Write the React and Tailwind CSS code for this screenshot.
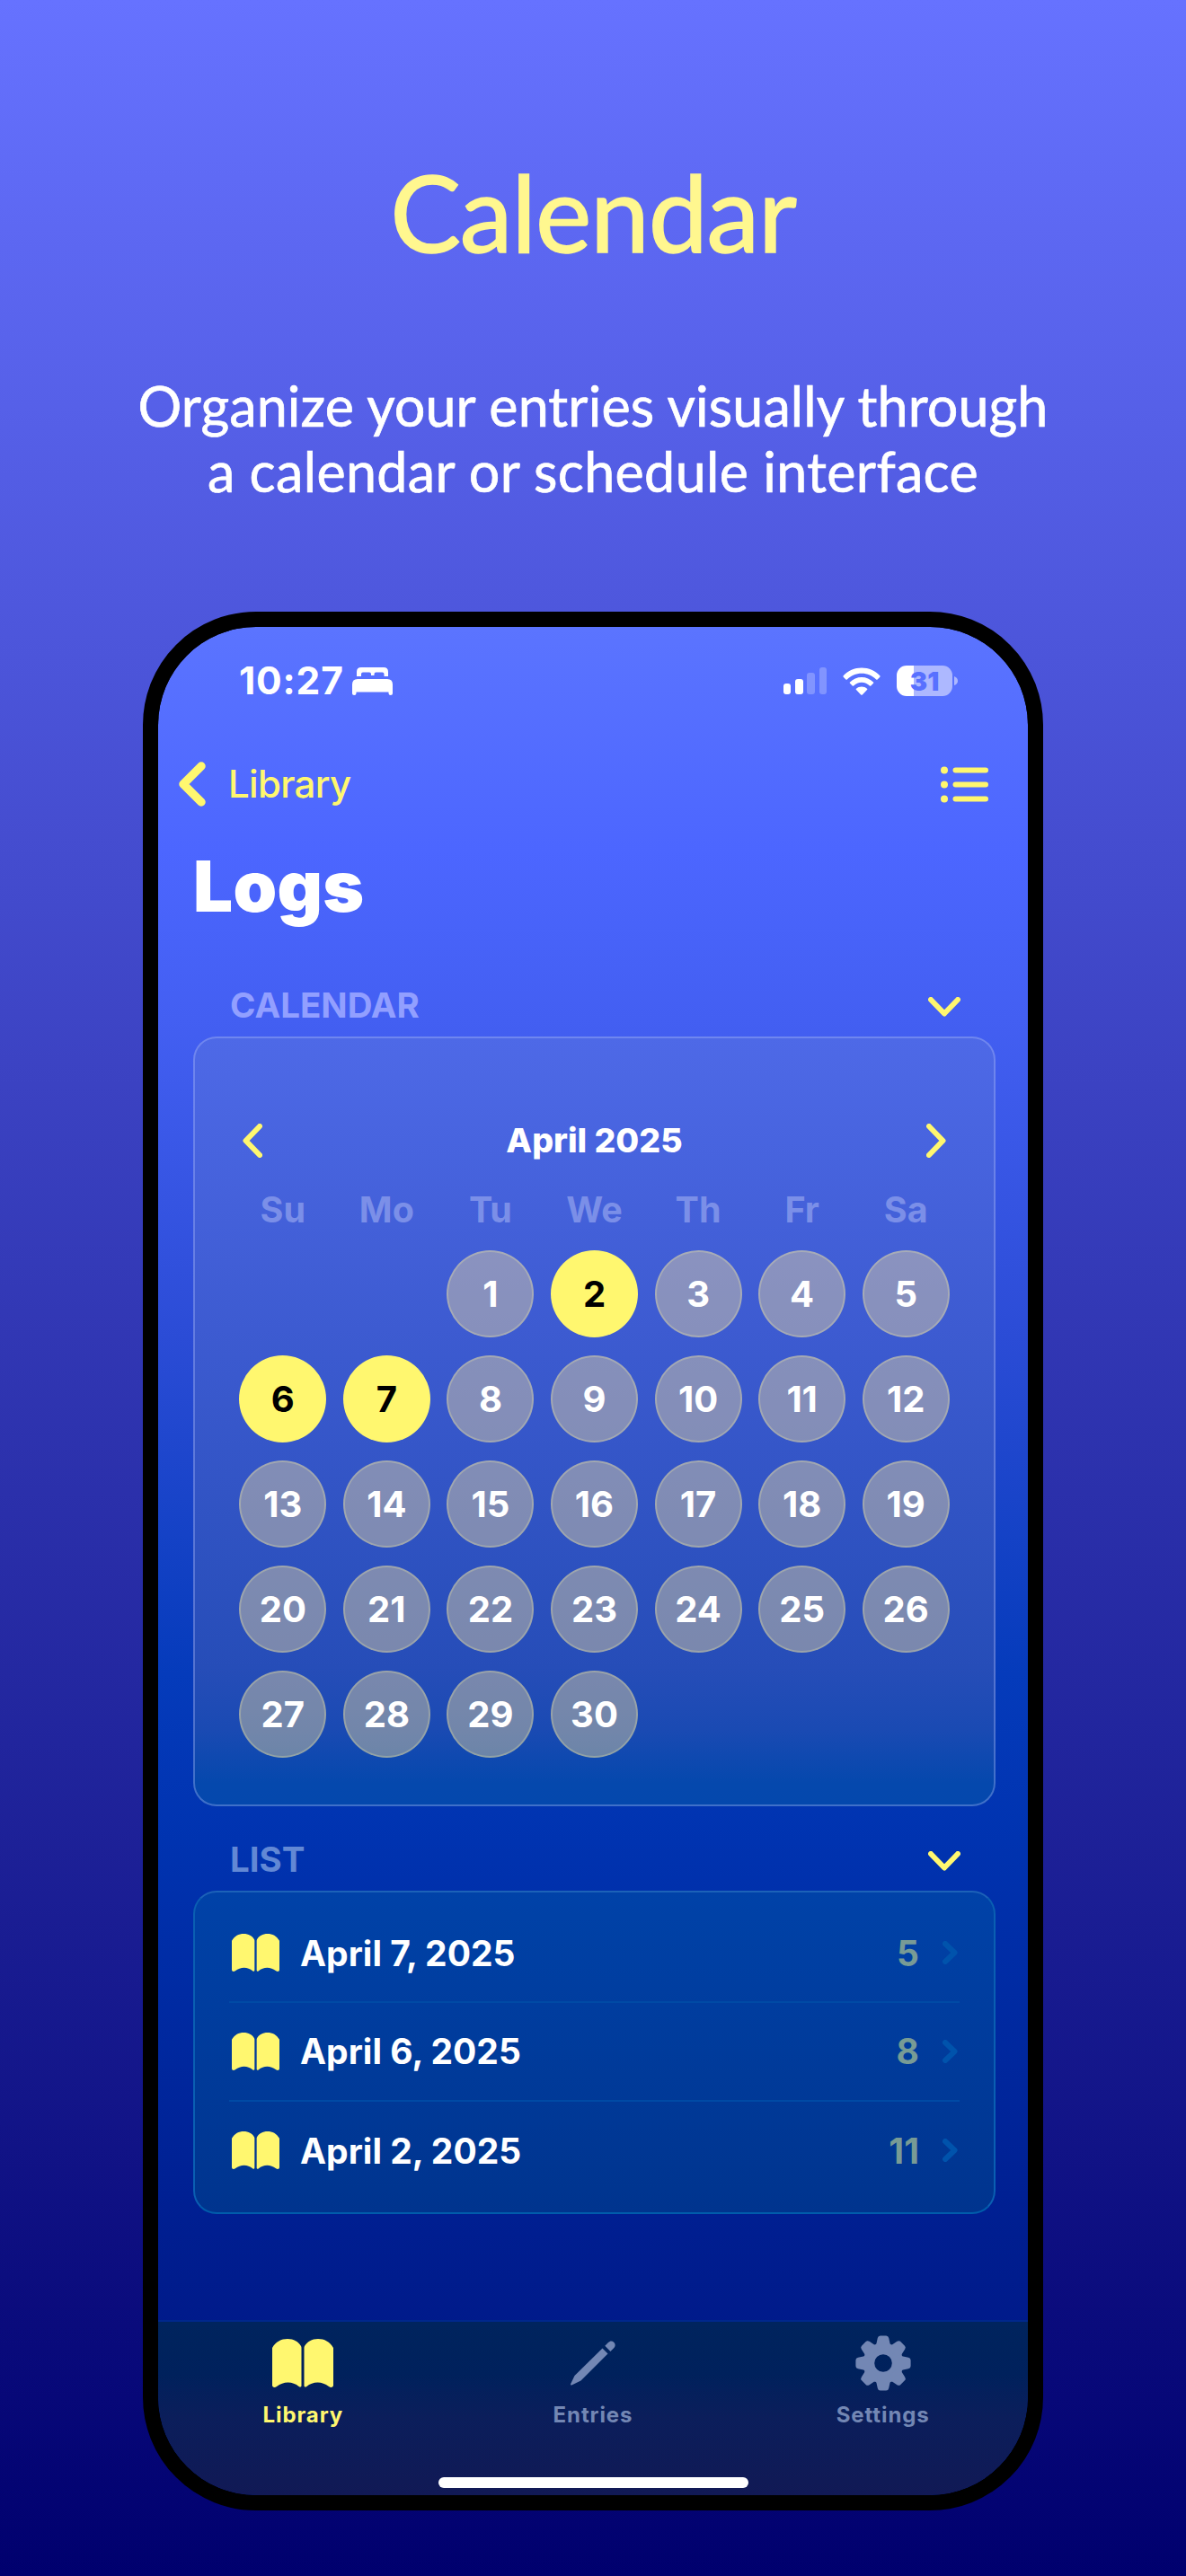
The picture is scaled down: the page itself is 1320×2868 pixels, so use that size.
import React from "react";

const DAYS = ["Su", "Mo", "Tu", "We", "Th", "Fr", "Sa"];
const MARKED = [2, 6, 7];
const CELLS = [null, null, ...Array.from({ length: 30 }, (_, i) => i + 1)];
const ENTRIES = [
  { date: "April 7, 2025", count: 5 },
  { date: "April 6, 2025", count: 8 },
  { date: "April 2, 2025", count: 11 },
];

function Chevron({ d, box, width, className }) {
  return (
    <svg viewBox={box} className={className} fill="none" stroke="currentColor" strokeWidth={width} strokeLinecap="round" strokeLinejoin="round">
      <path d={d} />
    </svg>
  );
}

function Book({ className }) {
  return (
    <svg viewBox="0 0 68 54" preserveAspectRatio="none" className={className} fill="currentColor">
      <path d="M0 10C4 3 10 0 17 0s12 3 15 8q.5 1 .5 2v42c0 1.500-1.500 2-2.500 1.200C26 50 22 48.500 17.500 48.500S9 50 5 53c-2.500 1.800-5 .8-5-1.500z" />
      <path d="M68 10C64 3 58 0 51 0S39 3 36 8q-.5 1-.5 2v42c0 1.500 1.500 2 2.500 1.200 4-3.200 8-4.700 12.500-4.700S59 50 63 53c2.500 1.800 5 .8 5-1.500z" />
    </svg>
  );
}

function Bed() {
  return (
    <svg viewBox="0 0 45 31" className="h-[31px] w-[45px]" fill="currentColor">
      <path d="M5 10V5q0-5 5-5h25q5 0 5 5v5h-4.500V7.500q0-2-2-2h-7q-2 0-2 2V9h-3.500V7.500q0-2-2-2h-7q-2 0-2 2V10z" />
      <path d="M0 19q0-6 6-6h33q6 0 6 6v10q0 2-2.200 2t-2.300-2v-1.500H4.500V29q0 2-2.300 2T0 29z" />
    </svg>
  );
}

function Wifi() {
  return (
    <svg viewBox="0 0 42 31" className="h-[31px] w-[42px]" fill="currentColor">
      <path d="M.7 9.300C6 3.800 13 .5 21 .5s15 3.300 20.300 8.800q.7.700 0 1.400l-2.700 2.700q-.7.700-1.400 0C33 9.200 27.300 6.700 21 6.700S9 9.200 4.800 13.400q-.7.700-1.400 0L.7 10.700q-.7-.7 0-1.400z" />
      <path d="M8 16.400c3.400-3.500 8-5.500 13-5.500s9.600 2 13 5.500q.7.700 0 1.400l-2.700 2.700q-.7.700-1.400 0C27.500 18.300 24.500 16.800 21 16.800s-6.500 1.500-8.900 3.700q-.7.700-1.400 0L8 17.800q-.7-.7 0-1.400z" />
      <path d="M15 23.700c1.600-1.500 3.700-2.300 6-2.300s4.400.8 6 2.300q.7.700 0 1.400l-5.200 5.300q-.8.800-1.600 0L15 25.100q-.7-.7 0-1.400z" />
    </svg>
  );
}

function Pencil() {
  return (
    <svg viewBox="0 0 50 50" className="h-[50px] w-[50px]" fill="currentColor">
      <path d="M35.500 8.500l6 6-30 30L1.300 49.400c-.9.400-1.600-.3-1.200-1.200L4.500 39z" />
      <path d="M38.300 5.700L42 2c2.200-2.200 4.400-2 6.200-.2s2 4 .2 6.200l-4 4z" />
    </svg>
  );
}

function Gear() {
  return (
    <svg viewBox="-31 -31 62 62" className="h-[62px] w-[62px]">
      <path fill="currentColor" fillRule="evenodd" d="M0-9.800a9.800 9.800 0 1 0 0 19.600a9.800 9.800 0 1 0 0-19.600zM0-22.500a22.500 22.500 0 1 1 0 45a22.500 22.500 0 1 1 0-45z" />
      {[0, 45, 90, 135, 180, 225, 270, 315].map((a) => (
        <path key={a} transform={`rotate(${a})`} fill="currentColor" d="M-10-19Q-8-20-7.500-22L-6.200-28Q-5.600-30.600-3.300-30.600H3.300Q5.600-30.600 6.200-28L7.500-22Q8-20 10-19L6-15H-6z" />
      ))}
    </svg>
  );
}

function StatusBar() {
  return (
    <div className="mt-[40px] flex h-[40px] items-center pr-[78px] pl-[90px] text-white">
      <span className="w-[126px] text-[42.500px] leading-none font-bold tracking-[0.8px]">10:27</span>
      <Bed />
      <div className="ml-auto flex items-center">
        <div className="flex h-[30px] items-end gap-[4.700px]">
          <i className="h-[12px] w-[8.500px] rounded-[3px] bg-white" />
          <i className="h-[17px] w-[8.500px] rounded-[3px] bg-white" />
          <i className="h-[24px] w-[8.500px] rounded-[3px] bg-white/25" />
          <i className="h-[30px] w-[8.500px] rounded-[3px] bg-white/25" />
        </div>
        <div className="ml-[18px]"><Wifi /></div>
        <div className="ml-[18px] flex h-[34px] w-[62px] items-center justify-center rounded-[11px] bg-[linear-gradient(90deg,#fff_19px,#adb8ff_19px)] text-[29px] leading-none font-black text-[#5870ff]">31</div>
        <svg viewBox="0 0 4 10" className="ml-[2px] h-[10px] w-[4px]" fill="#adb8ff"><path d="M0 0q4 1.500 4 5t-4 5z" /></svg>
      </div>
    </div>
  );
}

function SectionLabel({ children, className }) {
  return (
    <div className={`flex h-[50px] items-center justify-between pr-[75px] pl-[80px] ${className}`}>
      <span className="text-[38.500px] leading-none font-[650]">{children}</span>
      <Chevron box="0 0 36 22" d="M3 3L18 18.500L33 3" width="6" className="mt-[4px] h-[22px] w-[36px] text-[#fff76f]" />
    </div>
  );
}

function CalendarCard() {
  return (
    <div className="mr-[36px] ml-[39px] flex h-[857px] flex-col rounded-[26px] border-[2.500px] border-[#aebcff]/35 bg-[linear-gradient(180deg,#4e69e7_0%,#3d5bd1_38%,#264db8_82%,#1a4ab3_90%,#0548ad_97%,#0448ad_100%)] bg-origin-border">
      <div className="mt-[90px] flex h-[48px] items-center justify-between px-[53px] text-white">
        <Chevron box="0 0 22 38" d="M19 3L3.500 19L19 35" width="6" className="h-[38px] w-[22px] text-[#fff76f]" />
        <span className="text-[37.500px] leading-none font-extrabold">April 2025</span>
        <Chevron box="0 0 22 38" d="M3 3L18.500 19L3 35" width="6" className="h-[38px] w-[22px] text-[#fff76f]" />
      </div>
      <div className="mx-[40px] mt-[28px] grid grid-cols-7 text-center text-[39.500px] leading-[50px] font-[650] text-[#7b8fe8]">
        {DAYS.map((d) => <span key={d}>{d}</span>)}
      </div>
      <div className="mx-[40px] mt-[20px] grid auto-rows-[117px] grid-cols-7 justify-items-center">
        {CELLS.map((n, i) => n === null ? <span key={i} /> : (
          <span key={i} className={`flex h-[97px] w-[97px] items-center justify-center rounded-full text-[40px] leading-none font-[650] ${MARKED.includes(n) ? "bg-[#fff76f] text-black" : "border-[2.500px] border-[#fff7a0]/25 bg-[#f7e29d]/40 bg-clip-border text-white"}`}>{n}</span>
        ))}
      </div>
    </div>
  );
}

function ListCard() {
  return (
    <div className="mr-[36px] ml-[39px] h-[360px] rounded-[26px] border-[2.500px] border-t-[#1c62b8] border-r-[#0a5fb2] border-b-[#005cab] border-l-[#0a5fb2] bg-[linear-gradient(180deg,#0042a8,#00348e)] px-[38px] pt-[13.500px]">
      {ENTRIES.map((e, i) => (
        <div key={e.date} className={`flex h-[109.500px] items-center ${i < 2 ? "border-b-2 border-[#004aa5]" : ""}`}>
          <Book className="ml-[3px] h-[42px] w-[53px] text-[#fff76f]" />
          <span className="ml-[23px] text-[39px] leading-none font-[650] text-white">{e.date}</span>
          <span className="ml-auto text-[39px] leading-none font-[650] text-[#789b95]">{e.count}</span>
          <Chevron box="0 0 17 26" d="M3 3L13.500 13L3 23" width="6" className="mr-[2px] ml-[26px] h-[26px] w-[17px] text-[#0053ac]" />
        </div>
      ))}
    </div>
  );
}

function Tab({ icon, label, className }) {
  return (
    <div className={`flex flex-1 flex-col items-center ${className}`}>
      <div className="flex h-[62px] items-center">{icon}</div>
      <span className="mt-[12px] text-[24px] leading-[30px] font-[650] tracking-[0.9px]">{label}</span>
    </div>
  );
}

export default function App() {
  return (
    <main className="flex h-[2868px] w-[1320px] flex-col items-center overflow-hidden bg-[linear-gradient(180deg,#6672ff,#00006e)] font-['Inter',sans-serif]">
      <h1 className="mt-[166px] h-[140px] font-['Lato',sans-serif] text-[118px] leading-[140px] font-normal tracking-[-1.200px] text-[#fff78f] [-webkit-text-stroke:1.500px_#fff78f]">Calendar</h1>
      <p className="mt-[109px] flex h-[146px] flex-col items-center font-['Lato',sans-serif] text-[61px] leading-[73px] font-normal whitespace-nowrap text-white [-webkit-text-stroke:0.700px_#fff]">
        <span className="tracking-[0.1px]">Organize your entries visually through</span>
        <span className="tracking-[0.35px]">a calendar or schedule interface</span>
      </p>
      <div className="mt-[120px] h-[2114px] w-[1002px] shrink-0 overflow-hidden rounded-[126px] border-[17px] border-black bg-black">
        <div className="flex h-full flex-col overflow-hidden rounded-[109px] bg-[linear-gradient(180deg,#5b74ff_0%,#4c66ff_12%,#435ff2_21%,#2b4cd6_38%,#053bbb_56%,#0033b0_65%,#0029a0_75%,#001e90_86%,#001a8a_91%)]">
          <StatusBar />
          <div className="mt-[65px] flex h-[60px] items-center pr-[44px] pl-[23px] text-[#fff76f]">
            <Chevron box="0 0 30 50" d="M25 5L5 25L25 45" width="9.500" className="h-[50px] w-[30px]" />
            <span className="ml-[25px] text-[42px] leading-none font-medium tracking-[-0.7px]">Library</span>
            <svg viewBox="0 0 53 41" className="ml-auto h-[41px] w-[53px]" fill="currentColor">
              {[4.5, 20.5, 36.5].map((y) => (
                <g key={y}><circle cx="4" cy={y} r="4" /><rect x="13.500" y={y - 3} width="39.500" height="6" rx="3" /></g>
              ))}
            </svg>
          </div>
          <h2 className="mt-[34px] h-[100px] pl-[39px] text-[78px] leading-[100px] font-black tracking-[0.3px] text-white">Logs</h2>
          <SectionLabel className="mt-[57px] text-[#929fff]">CALENDAR</SectionLabel>
          <div className="h-[10px] shrink-0" />
          <CalendarCard />
          <SectionLabel className="mt-[34px] text-[#6288d5]">LIST</SectionLabel>
          <div className="h-[10px] shrink-0" />
          <ListCard />
          <nav className="mt-auto flex h-[195px] shrink-0 flex-col border-t-2 border-[#00288c] bg-[linear-gradient(180deg,#00245e_0%,#00215c_30%,#0b1e5b_55%,#111955_100%)]">
            <div className="flex pt-[15px]">
              <Tab icon={<Book className="h-[54px] w-[68px]" />} label="Library" className="text-[#fff76f]" />
              <Tab icon={<Pencil />} label="Entries" className="text-[#7387b4]" />
              <Tab icon={<Gear />} label="Settings" className="text-[#7387b4]" />
            </div>
            <div className="mx-auto mt-auto mb-[8px] h-[12px] w-[345px] rounded-full bg-white" />
          </nav>
        </div>
      </div>
    </main>
  );
}
